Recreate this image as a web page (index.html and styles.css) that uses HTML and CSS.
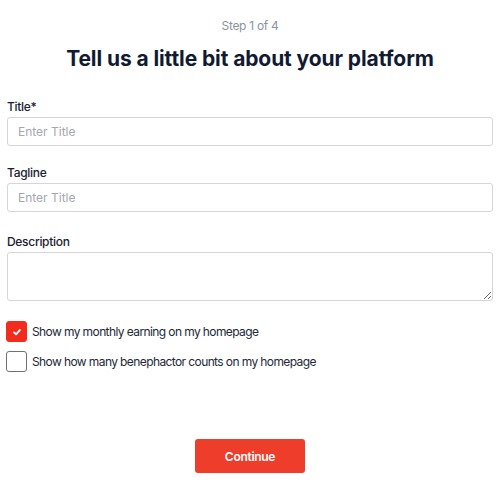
FILE: index.html
```html
<!DOCTYPE html>
<html lang="en">
<head>
<meta charset="utf-8">
<title>Step 1 of 4</title>
<link rel="stylesheet" href="styles.css">
</head>
<body>
<main class="page">
  <p class="step">Step 1 of 4</p>
  <h1 class="heading">Tell us a little bit about your platform</h1>
  <form class="form">
    <div class="field field-title">
      <label class="label" for="title">Title*</label>
      <input class="input" id="title" type="text" placeholder="Enter Title">
    </div>
    <div class="field field-tagline">
      <label class="label" for="tagline">Tagline</label>
      <input class="input" id="tagline" type="text" placeholder="Enter Title">
    </div>
    <div class="field field-desc">
      <label class="label" for="desc">Description</label>
      <textarea class="textarea" id="desc"></textarea>
    </div>
    <div class="checks">
      <label class="check">
        <span class="box box-on">
          <svg viewBox="0 0 12 12" width="12" height="12"><path d="M3 6.4 L5.1 8.3 L9 3.9" fill="none" stroke="#fff" stroke-width="1.9" stroke-linecap="round" stroke-linejoin="round"/></svg>
        </span>
        <span class="check-text">Show my monthly earning on my homepage</span>
      </label>
      <label class="check">
        <span class="box"></span>
        <span class="check-text">Show how many benephactor counts on my homepage</span>
      </label>
    </div>
    <div class="actions">
      <button class="btn" type="button">Continue</button>
    </div>
  </form>
</main>
</body>
</html>
```
FILE: styles.css
```css
* { box-sizing: border-box; }
html, body { margin: 0; padding: 0; background: #fff; }
body { font-family: Inter, "Noto Sans", sans-serif; color: #161c2d; }
.page { padding: 16px 7px 0; }
.step {
  margin: 0;
  text-align: center;
  font-size: 12px;
  line-height: 19px;
  letter-spacing: -0.3px;
  color: #8a93a3;
}
.heading {
  margin: 10px 0 0;
  text-align: center;
  font-size: 21px;
  line-height: 28px;
  font-weight: 700;
  letter-spacing: -0.1px;
  color: #111a32;
}
.form { display: flex; flex-direction: column; }
.field { display: flex; flex-direction: column; gap: 2px; }
.field-title { margin-top: 26px; }
.field-tagline { margin-top: 19px; }
.field-desc { margin-top: 22px; }
.label {
  font-size: 12px;
  line-height: 16px;
  font-weight: 500;
  letter-spacing: -0.3px;
  color: #1b2030;
}
.input, .textarea {
  width: 100%;
  border: 1px solid #d4d6da;
  border-radius: 3px;
  font-family: inherit;
  font-size: 12px;
  color: #1b2030;
  background: #fff;
  outline: none;
}
.input { height: 29px; padding: 0 10px; }
.textarea { height: 49px; padding: 6px 10px; resize: vertical; display: block; }
.input::placeholder { color: #a3a7ae; }
.checks { margin-top: 20px; display: flex; flex-direction: column; gap: 9px; }
.check { display: flex; align-items: center; gap: 5px; cursor: pointer; }
.box {
  width: 21px;
  height: 21px;
  border: 1.5px solid #6e7176;
  border-radius: 3px;
  display: flex;
  align-items: center;
  justify-content: center;
  margin-left: -1px;
}
.box-on { background: #f22b1c; border-color: #f22b1c; }
.check-text {
  font-size: 12px;
  line-height: 16px;
  letter-spacing: -0.6px;
  color: #222838;
}
.actions { display: flex; justify-content: center; margin-top: 67px; }
.btn {
  width: 110px;
  height: 34px;
  border: none;
  border-radius: 3px;
  background: #ee3d2a;
  color: #fff;
  font-family: inherit;
  font-size: 12px;
  font-weight: 600;
  letter-spacing: -0.3px;
}
```
